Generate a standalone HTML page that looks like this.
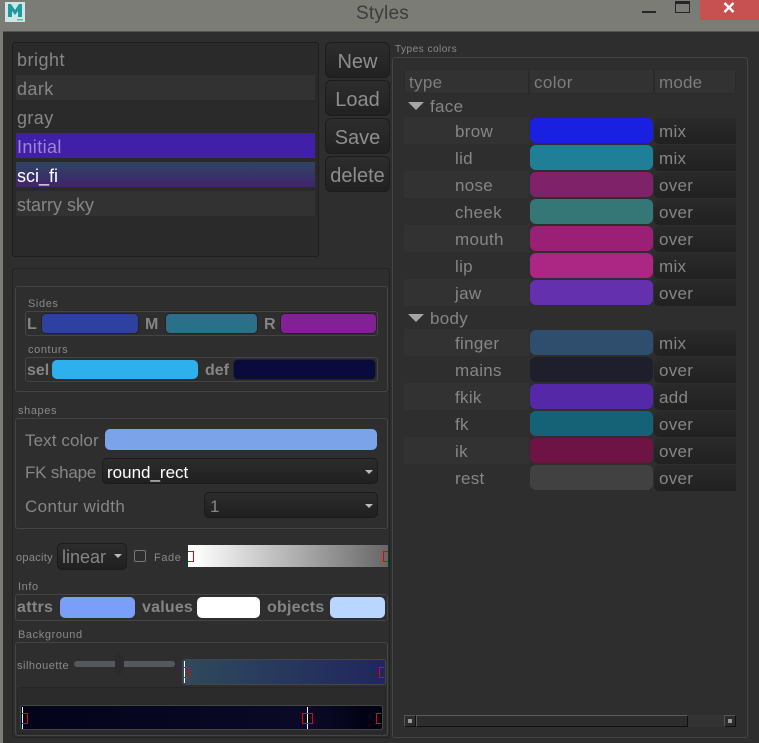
<!DOCTYPE html>
<html><head><meta charset="utf-8"><style>
html,body{margin:0;padding:0;background:#7b7c76}
#r{position:relative;width:759px;height:743px;overflow:hidden;background:#7b7c76;font-family:"Liberation Sans",sans-serif;color:#868686}
#r div,#r span.t{position:absolute;box-sizing:border-box}
.t{line-height:20px;font-size:18px;white-space:nowrap;margin-top:1px}
.s{font-size:11px;letter-spacing:.6px;color:#8a8a8a}
.b{font-weight:bold;font-size:16px;color:#858585}
.g{border:1px solid #444;border-radius:3px}
.sw{border-radius:5px;border:1px solid #222}
.c{background:linear-gradient(#2c2c2c,#202020);border:1px solid #1b1b1b;border-radius:5px}
.btn{left:325px;width:65px;height:36px;background:linear-gradient(#2d2d2d,#212121);border:1px solid #1c1c1c;border-radius:6px;text-align:center;font-size:20px;line-height:39px;color:#8e8e8e}
.arr{width:0;height:0;border-left:4px solid transparent;border-right:4px solid transparent;border-top:4px solid #bbb}
.tri{left:408px;width:0;height:0;border-left:8px solid transparent;border-right:8px solid transparent;border-top:8px solid #a5a5a5}
.m{position:absolute;border:1px solid #ee0000;box-sizing:border-box}
.rw{left:404px;width:125px;height:27px}
.mc{left:654px;width:82px;height:26px;background:linear-gradient(#2a2a2a,#212121);border-radius:5px 0 0 5px}
.cs{left:530px;width:123px;height:25px;border-radius:6px}
</style></head><body><div id="r">

<div style="left:5px;top:2px;width:20px;height:20px;background:#cfe6e4"></div>
<svg style="position:absolute;left:5px;top:2px" width="20" height="20"><path d="M3 15V2h3l4 6 4-6h3v13h-4V9l-3 4-3-4v6z" fill="#1f9a9f"/><rect x="12" y="17" width="6" height="1.5" fill="#5fb4b8"/></svg>
<span class="t" style="left:356px;top:3px;font-size:19px;letter-spacing:.2px;color:#3b3d3e">Styles</span>
<div style="left:642px;top:11px;width:14px;height:2px;background:#262626"></div>
<div style="left:675px;top:1px;width:15px;height:12px;border:1px solid #262626;border-top:3px solid #262626"></div>
<div style="left:700px;top:0;width:59px;height:20px;background:#c75050"></div>
<svg style="position:absolute;left:723px;top:2px" width="12" height="11"><path d="M1.5 1l9 9M10.5 1l-9 9" stroke="#fff" stroke-width="2.4"/></svg>

<div style="left:3px;top:31px;width:756px;height:712px;background:#2e2e2e;border-top:1px solid #555"></div>

<div style="left:12px;top:42px;width:307px;height:215px;background:#2a2a2a;border:1px solid #1e1e1e;border-radius:3px"></div>
<div style="left:16px;top:75px;width:299px;height:25px;background:#323232"></div>
<div style="left:16px;top:133px;width:299px;height:25px;background:#4020a8"></div>
<div style="left:16px;top:162px;width:299px;height:25px;background:linear-gradient(#2f4462,#40246e)"></div>
<div style="left:16px;top:191px;width:299px;height:25px;background:#323232"></div>
<span class="t" style="left:17px;top:49px;letter-spacing:.5px">bright</span>
<span class="t" style="left:17px;top:78px;letter-spacing:.4px">dark</span>
<span class="t" style="left:17px;top:107px;letter-spacing:.4px">gray</span>
<span class="t" style="left:17px;top:136px;letter-spacing:.4px;color:#9b86d2">Initial</span>
<span class="t" style="left:17px;top:165px;color:#fff">sci_fi</span>
<span class="t" style="left:17px;top:194px">starry sky</span>

<div class="btn" style="top:42px">New</div>
<div class="btn" style="top:80px">Load</div>
<div class="btn" style="top:118px">Save</div>
<div class="btn" style="top:156px">delete</div>

<div style="left:12px;top:268px;width:378px;height:470px;border:1px solid #232323;border-radius:3px"></div>

<div class="g" style="left:15px;top:286px;width:373px;height:106px"></div>
<span class="t s" style="left:28px;top:293px">Sides</span>
<div style="left:25px;top:311px;width:353px;height:25px;border:1px solid #444;border-radius:3px"></div>
<span class="t b" style="left:27px;top:314px">L</span>
<div class="sw" style="left:41px;top:313px;width:98px;height:21px;background:#2f41a0"></div>
<span class="t b" style="left:145px;top:314px">M</span>
<div class="sw" style="left:165px;top:313px;width:93px;height:21px;background:#2a7089"></div>
<span class="t b" style="left:264px;top:314px">R</span>
<div class="sw" style="left:280px;top:313px;width:97px;height:21px;background:#832096"></div>
<span class="t s" style="left:28px;top:339px">conturs</span>
<div style="left:25px;top:357px;width:353px;height:25px;border:1px solid #444;border-radius:3px"></div>
<span class="t b" style="left:27px;top:360px">sel</span>
<div class="sw" style="left:52px;top:360px;width:146px;height:19px;background:#2eb0ec;border-color:#2eb0ec"></div>
<span class="t b" style="left:205px;top:360px">def</span>
<div class="sw" style="left:233px;top:359px;width:143px;height:21px;background:#0a0a3c"></div>

<span class="t s" style="left:18px;top:400px">shapes</span>
<div class="g" style="left:15px;top:418px;width:373px;height:111px"></div>
<span class="t" style="left:25px;top:430px;font-size:17px;letter-spacing:.1px">Text color</span>
<div class="sw" style="left:105px;top:429px;width:272px;height:21px;background:#7ba3ea;border-color:#7ba3ea"></div>
<span class="t" style="left:25px;top:462px;font-size:17px;letter-spacing:-.2px">FK shape</span>
<div class="c" style="left:102px;top:458px;width:276px;height:26px"></div>
<span class="t" style="left:107px;top:462px;color:#fff;font-size:17px">round_rect</span>
<div class="arr" style="left:365px;top:470px"></div>
<span class="t" style="left:25px;top:496px;font-size:17px;letter-spacing:.4px">Contur width</span>
<div class="c" style="left:204px;top:492px;width:174px;height:26px"></div>
<span class="t" style="left:210px;top:496px;font-size:17px">1</span>
<div class="arr" style="left:365px;top:504px"></div>

<span class="t s" style="left:16px;top:547px;letter-spacing:.3px">opacity</span>
<div class="c" style="left:57px;top:543px;width:70px;height:27px"></div>
<span class="t" style="left:62px;top:546px;font-size:18px">linear</span>
<div class="arr" style="left:114px;top:554px"></div>
<div style="left:134px;top:550px;width:12px;height:12px;border:1px solid #777;border-radius:2px"></div>
<span class="t s" style="left:154px;top:547px">Fade</span>
<div style="left:188px;top:545px;width:200px;height:22px;background:linear-gradient(90deg,#fff,#fff 3%,#666)"><span class="m" style="left:0;top:6px;width:6px;height:11px;border-left:0"></span><span class="m" style="left:195px;top:6px;width:5px;height:11px;border-right:0"></span></div>

<span class="t s" style="left:18px;top:576px">Info</span>
<div class="g" style="left:15px;top:594px;width:373px;height:27px"></div>
<span class="t b" style="left:17px;top:597px;letter-spacing:.3px">attrs</span>
<div class="sw" style="left:60px;top:597px;width:75px;height:21px;background:#7a9ff8;border-color:#7a9ff8"></div>
<span class="t b" style="left:142px;top:597px;letter-spacing:.2px">values</span>
<div class="sw" style="left:197px;top:597px;width:63px;height:21px;background:#fff;border-color:#fff"></div>
<span class="t b" style="left:267px;top:597px;letter-spacing:.2px">objects</span>
<div class="sw" style="left:330px;top:597px;width:55px;height:21px;background:#b8d6ff;border-color:#b8d6ff"></div>

<span class="t s" style="left:18px;top:624px">Background</span>
<div class="g" style="left:15px;top:642px;width:373px;height:94px"></div>
<span class="t s" style="left:17px;top:655px;letter-spacing:.5px">silhouette</span>
<div style="left:74px;top:661px;width:101px;height:6px;background:#55585c;border-radius:3px"></div>
<div style="left:115px;top:654px;width:9px;height:20px;background:#2b2b2b;border-radius:4px"></div>
<div style="left:182px;top:659px;width:204px;height:26px;border:1px solid #444;border-radius:3px;background:linear-gradient(90deg,#2f4a5c,#20265e)">
 <div style="left:1px;top:1px;width:1px;height:22px;background:#fff"></div>
 <span class="m" style="left:1px;top:7px;width:6px;height:11px;border-left:0"></span>
 <span class="m" style="left:196px;top:7px;width:5px;height:11px;border-right:0"></span>
</div>
<div style="left:17px;top:687px;width:369px;height:47px;background:#2b2b2b;border:1px solid #262626;border-radius:3px"></div>
<div style="left:20px;top:705px;width:363px;height:25px;border:1px solid #444;border-radius:3px;background:linear-gradient(90deg,#03031a,#0a0a28 80%,#020214 95%)">
 <div style="left:1px;top:1px;width:1px;height:22px;background:#fff"></div>
 <div style="left:286px;top:1px;width:1px;height:22px;background:#fff"></div>
 <span class="m" style="left:1px;top:7px;width:6px;height:11px;border-left:0"></span>
 <span class="m" style="left:281px;top:7px;width:11px;height:11px"></span>
 <span class="m" style="left:355px;top:7px;width:5px;height:11px;border-right:0"></span>
</div>

<span class="t s" style="left:395px;top:39px;font-size:10px;letter-spacing:.5px">Types colors</span>
<div class="g" style="left:392px;top:57px;width:356px;height:681px"></div>
<div style="left:404px;top:69px;width:332px;height:25px;background:#323232;border:1px solid #2c2c2c"></div>
<div style="left:528px;top:69px;width:2px;height:25px;background:#2a2a2a"></div>
<div style="left:653px;top:69px;width:2px;height:25px;background:#2a2a2a"></div>
<span class="t" style="left:409px;top:72px;font-size:17px;color:#7d7d7d;letter-spacing:.3px">type</span>
<span class="t" style="left:534px;top:72px;font-size:17px;color:#7d7d7d;letter-spacing:.4px">color</span>
<span class="t" style="left:659px;top:72px;font-size:17px;color:#7d7d7d;letter-spacing:.2px">mode</span>

<div class="tri" style="top:102px"></div><span class="t" style="left:430px;top:96px;font-size:17px;letter-spacing:.3px">face</span>
<div class="tri" style="top:314px"></div><span class="t" style="left:430px;top:308px;font-size:17px;letter-spacing:.3px">body</span>

<div class="rw" style="top:117px;background:#323232"></div><div class="rw" style="top:171px;background:#323232"></div><div class="rw" style="top:225px;background:#323232"></div><div class="rw" style="top:279px;background:#323232"></div><div class="rw" style="top:329px;background:#323232"></div><div class="rw" style="top:383px;background:#323232"></div><div class="rw" style="top:437px;background:#323232"></div>

<span class="t" style="left:455px;top:121px;font-size:17px;letter-spacing:.3px">brow</span><div class="cs" style="top:118px;background:#1a20e2"></div><div class="mc" style="top:118px"></div><span class="t" style="left:659px;top:121px;font-size:17px;letter-spacing:.3px">mix</span>
<span class="t" style="left:455px;top:148px;font-size:17px;letter-spacing:.3px">lid</span><div class="cs" style="top:145px;background:#1f7f97"></div><div class="mc" style="top:145px"></div><span class="t" style="left:659px;top:148px;font-size:17px;letter-spacing:.3px">mix</span>
<span class="t" style="left:455px;top:175px;font-size:17px;letter-spacing:.3px">nose</span><div class="cs" style="top:172px;background:#80226a"></div><div class="mc" style="top:172px"></div><span class="t" style="left:659px;top:175px;font-size:17px;letter-spacing:.3px">over</span>
<span class="t" style="left:455px;top:202px;font-size:17px;letter-spacing:.3px">cheek</span><div class="cs" style="top:199px;background:#357776"></div><div class="mc" style="top:199px"></div><span class="t" style="left:659px;top:202px;font-size:17px;letter-spacing:.3px">over</span>
<span class="t" style="left:455px;top:229px;font-size:17px;letter-spacing:.3px">mouth</span><div class="cs" style="top:226px;background:#9a2076"></div><div class="mc" style="top:226px"></div><span class="t" style="left:659px;top:229px;font-size:17px;letter-spacing:.3px">over</span>
<span class="t" style="left:455px;top:256px;font-size:17px;letter-spacing:.3px">lip</span><div class="cs" style="top:253px;background:#ac2683"></div><div class="mc" style="top:253px"></div><span class="t" style="left:659px;top:256px;font-size:17px;letter-spacing:.3px">mix</span>
<span class="t" style="left:455px;top:283px;font-size:17px;letter-spacing:.3px">jaw</span><div class="cs" style="top:280px;background:#6530ae"></div><div class="mc" style="top:280px"></div><span class="t" style="left:659px;top:283px;font-size:17px;letter-spacing:.3px">over</span>
<span class="t" style="left:455px;top:333px;font-size:17px;letter-spacing:.3px">finger</span><div class="cs" style="top:330px;background:#2f4e6e"></div><div class="mc" style="top:330px"></div><span class="t" style="left:659px;top:333px;font-size:17px;letter-spacing:.3px">mix</span>
<span class="t" style="left:455px;top:360px;font-size:17px;letter-spacing:.3px">mains</span><div class="cs" style="top:357px;background:#1f1f2b"></div><div class="mc" style="top:357px"></div><span class="t" style="left:659px;top:360px;font-size:17px;letter-spacing:.3px">over</span>
<span class="t" style="left:455px;top:387px;font-size:17px;letter-spacing:.3px">fkik</span><div class="cs" style="top:384px;background:#5428a6"></div><div class="mc" style="top:384px"></div><span class="t" style="left:659px;top:387px;font-size:17px;letter-spacing:.3px">add</span>
<span class="t" style="left:455px;top:414px;font-size:17px;letter-spacing:.3px">fk</span><div class="cs" style="top:411px;background:#156277"></div><div class="mc" style="top:411px"></div><span class="t" style="left:659px;top:414px;font-size:17px;letter-spacing:.3px">over</span>
<span class="t" style="left:455px;top:441px;font-size:17px;letter-spacing:.3px">ik</span><div class="cs" style="top:438px;background:#6e1445"></div><div class="mc" style="top:438px"></div><span class="t" style="left:659px;top:441px;font-size:17px;letter-spacing:.3px">over</span>
<span class="t" style="left:455px;top:468px;font-size:17px;letter-spacing:.3px">rest</span><div class="cs" style="top:465px;background:#414141"></div><div class="mc" style="top:465px"></div><span class="t" style="left:659px;top:468px;font-size:17px;letter-spacing:.3px">over</span>

<div style="left:404px;top:715px;width:332px;height:12px;background:#333"></div>
<div style="left:404px;top:715px;width:12px;height:12px;background:#2d2d2d;border:1px solid;border-color:#555 #111 #111 #555"></div>
<div style="left:408px;top:719px;width:4px;height:4px;background:#999"></div>
<div style="left:416px;top:715px;width:272px;height:12px;background:#2d2d2d;border:1px solid;border-color:#5a5a5a #111 #111 #5a5a5a"></div>
<div style="left:724px;top:715px;width:12px;height:12px;background:#2d2d2d;border:1px solid;border-color:#555 #111 #111 #555"></div>
<div style="left:728px;top:719px;width:4px;height:4px;background:#999"></div>
</div></body></html>
